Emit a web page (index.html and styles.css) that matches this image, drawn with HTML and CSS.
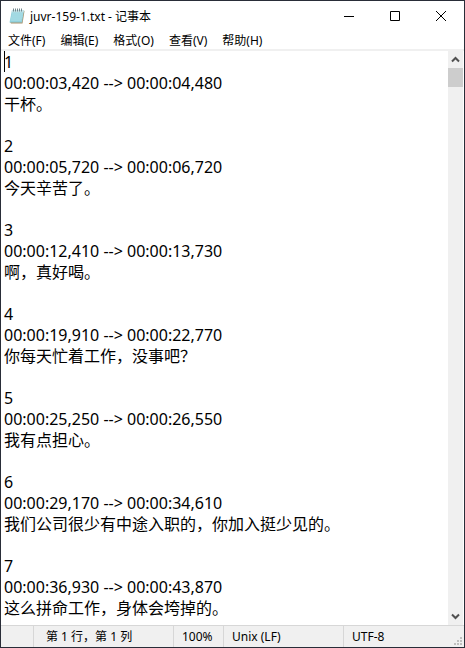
FILE: index.html
```html
<!DOCTYPE html>
<html lang="zh-CN">
<head>
    <meta charset="UTF-8">
    <meta name="viewport" content="width=device-width, initial-scale=1.0">
    <title>juvr-159-1.txt - 记事本</title>
    <link rel="stylesheet" href="styles.css">
</head>
<body>
    <div class="window">
        <header class="titlebar">
            <svg class="app-icon" width="16" height="16" viewBox="0 0 16 16">
                <path d="M14 2l1.500 1-2 12.500H2L1 14z" fill="#a8906a"/>
                <path d="M3 2h12l-2 12.500H.5z" fill="#8fd0dc"/>
                <path d="M3 2h12l-.4 2.500H2.500z" fill="#c4e3e8"/>
                <path d="M3 6h11M2.500 8h11M2 10h11M1.500 12h11" stroke="#b5e3ea" fill="none"/>
                <path d="M4.500 .5v3M6.500 .5v3M8.500 .5v3M10.500 .5v3M12.500 .5v3" stroke="#71868c" fill="none"/>
            </svg>
            <h1>juvr-159-1.txt - 记事本</h1>
            <div class="window-buttons">
                <button type="button" aria-label="最小化"><svg width="10" height="10" viewBox="0 0 10 10"><path d="M0 5.500h10"/></svg></button>
                <button type="button" aria-label="最大化"><svg width="10" height="10" viewBox="0 0 10 10"><path d="M.5 .5h9v9h-9z"/></svg></button>
                <button type="button" aria-label="关闭"><svg width="10" height="10" viewBox="0 0 10 10"><path d="M0 0l10 10M10 0L0 10"/></svg></button>
            </div>
        </header>

        <nav class="menubar">
            <button type="button">文件(F)</button>
            <button type="button">编辑(E)</button>
            <button type="button">格式(O)</button>
            <button type="button">查看(V)</button>
            <button type="button">帮助(H)</button>
        </nav>

        <main class="editor">
            <textarea class="text" aria-label="文本编辑器" spellcheck="false" wrap="off">1
00:00:03,420 --&gt; 00:00:04,480
干杯。

2
00:00:05,720 --&gt; 00:00:06,720
今天辛苦了。

3
00:00:12,410 --&gt; 00:00:13,730
啊，真好喝。

4
00:00:19,910 --&gt; 00:00:22,770
你每天忙着工作，没事吧？

5
00:00:25,250 --&gt; 00:00:26,550
我有点担心。

6
00:00:29,170 --&gt; 00:00:34,610
我们公司很少有中途入职的，你加入挺少见的。

7
00:00:36,930 --&gt; 00:00:43,870
这么拼命工作，身体会垮掉的。</textarea>
            <span class="caret"></span>
            <div class="scrollbar">
                <button type="button" aria-label="向上滚动"><svg width="9" height="7" viewBox="0 0 9 7"><path d="M1 5.500l3.500-3.500L8 5.500"/></svg></button>
                <div class="thumb"></div>
                <button type="button" class="down" aria-label="向下滚动"><svg width="9" height="7" viewBox="0 0 9 7"><path d="M1 1.500L4.500 5L8 1.500"/></svg></button>
            </div>
        </main>

        <footer class="statusbar">
            <span class="blank"></span>
            <span class="position">第 1 行，第 1 列</span>
            <span class="zoom">100%</span>
            <span class="line-ending">Unix (LF)</span>
            <span class="encoding">UTF-8</span>
            <svg class="grip" width="9" height="9" viewBox="0 0 9 9">
                <path d="M6 0h2v2H6zM3 3h2v2H3zM6 3h2v2H6zM0 6h2v2H0zM3 6h2v2H3zM6 6h2v2H6z"/>
            </svg>
        </footer>
    </div>
</body>
</html>
```

FILE: styles.css
```css
* {
    box-sizing: border-box;
}
body {
    margin: 0;
    font-family: "Noto Sans", "Noto Sans CJK SC", sans-serif;
    font-size: 12px;
    color: #000;
}
button {
    padding: 0;
    border: none;
    background: none;
    font: inherit;
    color: inherit;
}
.window {
    display: flex;
    flex-direction: column;
    height: 100vh;
    background-color: #fff;
    border: 1px solid #292d38;
}
.titlebar {
    display: flex;
    align-items: center;
    height: 29px;
    padding-left: 8px;
}
.titlebar h1 {
    margin: 0 auto 0 5px;
    font-size: 12px;
    font-weight: normal;
}
.window-buttons {
    display: flex;
}
.window-buttons button {
    display: flex;
    align-items: center;
    justify-content: center;
    width: 46px;
    height: 29px;
}
.window-buttons button:hover {
    background-color: #e5e5e5;
}
.window-buttons path {
    fill: none;
    stroke: #000;
}
.menubar {
    display: flex;
    gap: 15px;
    height: 21px;
    padding-left: 7px;
    border-bottom: 2px solid #f0f0f0;
}
.menubar button:hover {
    background-color: #e5f3ff;
}
.editor {
    position: relative;
    display: flex;
    flex: 1;
    min-height: 0;
}
.text {
    flex: 1;
    min-width: 0;
    padding: 1px 3px 0;
    border: none;
    outline: none;
    resize: none;
    overflow: hidden;
    font-family: inherit;
    font-size: 16px;
    line-height: 21px;
    color: #000;
}
.caret {
    position: absolute;
    top: 0;
    left: 3px;
    width: 1px;
    height: 21px;
    background-color: #000;
}
.scrollbar {
    display: flex;
    flex-direction: column;
    width: 16px;
    border-right: 1px solid #fff;
    background-color: #f0f0f0;
}
.scrollbar button {
    height: 17px;
    display: flex;
    align-items: center;
    justify-content: center;
}
.scrollbar path {
    fill: none;
    stroke: #505050;
    stroke-width: 2;
}
.scrollbar .down {
    margin-top: auto;
}
.thumb {
    height: 19px;
    background-color: #cdcdcd;
}
.statusbar {
    position: relative;
    display: flex;
    height: 22px;
    line-height: 22px;
    background-color: #f0f0f0;
    border-top: 1px solid #d7d7d7;
}
.statusbar span {
    border-right: 1px solid #d7d7d7;
    padding-left: 8px;
    white-space: nowrap;
}
.statusbar .blank {
    flex: 1;
}
.statusbar .position {
    width: 140px;
    padding-left: 12px;
}
.statusbar .zoom {
    width: 50px;
}
.statusbar .line-ending {
    width: 120px;
}
.statusbar .encoding {
    width: 120px;
    border-right: none;
}
.grip {
    position: absolute;
    right: 1px;
    bottom: 1px;
    fill: #bfbfbf;
}
```
